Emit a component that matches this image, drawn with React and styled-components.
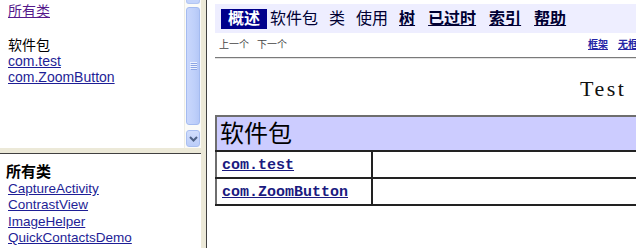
import React from 'react';
import styled, { createGlobalStyle } from 'styled-components';

// ─── Global ───────────────────────────────────────────────────────────────────
const GlobalStyle = createGlobalStyle`
  html, body { margin: 0; padding: 0; overflow: hidden; background: #ECE9D8; }
  #root { width: 636px; height: 248px; }
`;

const CJK = `"Liberation Sans", "Noto Sans CJK SC", sans-serif`;
const MONO = `"Liberation Mono", "Noto Sans CJK SC", monospace`;

// ─── Frameset ────────────────────────────────────────────────────────────────
const Frameset = styled.div`
  display: grid;
  grid-template-columns: 201px 1fr;
  column-gap: 5px;
  width: 636px;
  height: 248px;
  background: #ECE9D8;
  overflow: hidden;
`;

const LeftColumn = styled.div`
  display: grid;
  grid-template-rows: 148px 1fr;
  row-gap: 5px;
  min-height: 0;
`;

const Frame = styled.div`
  background: #fff;
  overflow: hidden;
  min-width: 0;
  min-height: 0;
  ${p => p.$top && 'border-top: 1px solid #404040;'}
  ${p => p.$left && 'border-left: 1px solid #404040;'}
`;

const ScrollFrame = styled(Frame)`
  display: flex;
`;

const FrameBody = styled.div`
  flex: 1;
  min-width: 0;
  padding: ${p => p.$pad || '3px 8px'};
  font-family: ${CJK};
  color: #000;
`;

// ─── Scrollbar (XP style) ────────────────────────────────────────────────────
const ScrollBar = styled.div`
  width: 17px;
  flex: none;
  display: flex;
  flex-direction: column;
  background: #FBFBF8;
  border-left: 1px solid #EEEDE5;
  box-sizing: border-box;
`;

const ScrollStub = styled.div`
  height: 4px;
  margin: 0 1px;
  background: #C4D4FB;
  border: 1px solid #B3C6F2;
  border-top: none;
  border-radius: 0 0 3px 3px;
  box-sizing: border-box;
`;

const ScrollThumb = styled.div`
  height: 118px;
  margin: 3px 1px 0;
  background: linear-gradient(90deg, #C9D7FC 0%, #BFD0FA 60%, #B5C8F7 100%);
  border: 1px solid #A4BBF0;
  border-radius: 3px;
  display: flex;
  align-items: center;
  justify-content: center;
  box-sizing: border-box;
`;

const ScrollSpace = styled.div`
  flex: 1;
`;

const ScrollButton = styled.div`
  height: 17px;
  margin: 0 1px 1px;
  background: linear-gradient(180deg, #D2DEFC 0%, #BBCDF9 100%);
  border: 1px solid #A9BFF1;
  border-radius: 3px;
  display: flex;
  align-items: center;
  justify-content: center;
  box-sizing: border-box;
`;

// ─── Left frames ─────────────────────────────────────────────────────────────
const FrameLink = styled.a`
  display: block;
  width: max-content;
  margin-left: ${p => p.$ml || 0}px;
  font-size: ${p => p.$size || 14}px;
  line-height: ${p => p.$lh || 16}px;
  color: ${p => (p.$visited ? '#551A8B' : '#1E1E96')};
  text-decoration: underline;
  white-space: nowrap;
`;

const FrameHeading = styled.div`
  font-size: ${p => p.$size || 14}px;
  line-height: ${p => p.$lh || 16}px;
  font-weight: ${p => (p.$bold ? 700 : 400)};
  margin-top: ${p => p.$mt || 0}px;
  white-space: nowrap;
`;

// ─── Right frame ─────────────────────────────────────────────────────────────
const Page = styled.div`
  width: 700px;
  padding: 4px 0 0 8px;
  font-family: ${CJK};
`;

const NavBar = styled.div`
  display: flex;
  align-items: center;
  gap: 3px;
  height: 29px;
  padding-left: 6px;
  background: #EEEEFF;
`;

const NavCell = styled.span`
  font-size: 16px;
  line-height: 20px;
  padding-right: ${p => (p.$link ? 10 : 8)}px;
  color: #000033;
  font-weight: ${p => (p.$link ? 700 : 400)};
  text-decoration: ${p => (p.$link ? 'underline' : 'none')};
  white-space: nowrap;
`;

const NavCellRev = styled.span`
  font-size: 16px;
  line-height: 20px;
  padding: 0 7px;
  background: #00008B;
  color: #fff;
  font-weight: 700;
`;

const SubNav = styled.div`
  display: flex;
  align-items: center;
  height: 16px;
  padding: 2px 0 0 4px;
  font-size: 10px;
  color: #444;
`;

const SubItem = styled.span`
  margin-right: 8px;
  white-space: nowrap;
`;

const SubLink = styled.a`
  margin-left: ${p => p.$ml || 0}px;
  margin-right: 10px;
  font-weight: 700;
  color: #2626A6;
  text-decoration: underline;
  white-space: nowrap;
`;

const Rule = styled.div`
  margin-top: 6px;
  border-top: 1px solid #7A7A7A;
  border-bottom: 1px solid #E2E2E2;
`;

const Title = styled.h2`
  margin: 17px 0 0;
  padding-left: 365px;
  font-family: "Liberation Serif", "Noto Sans CJK SC", serif;
  font-weight: 400;
  font-size: 22px;
  letter-spacing: 2.5px;
  line-height: 26px;
  color: #111;
`;

const Table = styled.table`
  margin-top: 13px;
  width: 700px;
  border-collapse: collapse;
  border: 2px solid #6E6E6E;
`;

const HeadCell = styled.th`
  height: 33px;
  padding: 0 3px;
  text-align: left;
  background: #CCCCFF;
  font-size: 24px;
  font-weight: 400;
  line-height: 28px;
  color: #000;
  border-bottom: 2px solid #222;
`;

const Cell = styled.td`
  height: 27px;
  padding: 0 5px;
  width: ${p => p.$w || 'auto'};
  border-bottom: 2px solid #222;
  border-right: ${p => (p.$first ? '2px solid #222' : 'none')};
  box-sizing: border-box;
`;

const CodeLink = styled.a`
  font-family: ${MONO};
  font-weight: 700;
  font-size: 15px;
  color: #1A1A80;
  text-decoration: underline;
`;

// ─── Data ────────────────────────────────────────────────────────────────────
const packages = ['com.test', 'com.ZoomButton'];
const classes = ['CaptureActivity', 'ContrastView', 'ImageHelper', 'QuickContactsDemo'];
const navItems = [
  { label: '软件包' },
  { label: '类' },
  { label: '使用' },
  { label: '树', link: true },
  { label: '已过时', link: true },
  { label: '索引', link: true },
  { label: '帮助', link: true },
];

export default function App() {
  return (
    <>
      <GlobalStyle />
      <Frameset>
        <LeftColumn>
          <ScrollFrame>
            <FrameBody>
              <FrameLink $visited>所有类</FrameLink>
              <FrameHeading $mt={18}>软件包</FrameHeading>
              {packages.map(p => (
                <FrameLink key={p}>{p}</FrameLink>
              ))}
            </FrameBody>
            <ScrollBar>
              <ScrollStub />
              <ScrollThumb>
                <svg width="7" height="8" viewBox="0 0 7 8">
                  {[0, 2, 4, 6].map(y => (
                    <line key={y} x1="0" y1={y + 0.5} x2="7" y2={y + 0.5} stroke="#EEF3FE" strokeWidth="1" />
                  ))}
                  {[1, 3, 5, 7].map(y => (
                    <line key={y} x1="1" y1={y + 0.5} x2="7" y2={y + 0.5} stroke="#8CA5E4" strokeWidth="1" />
                  ))}
                </svg>
              </ScrollThumb>
              <ScrollSpace />
              <ScrollButton>
                <svg width="9" height="6" viewBox="0 0 9 6">
                  <path d="M1 1 L4.5 4.5 L8 1" fill="none" stroke="#4D6185" strokeWidth="2" />
                </svg>
              </ScrollButton>
            </ScrollBar>
          </ScrollFrame>

          <Frame $top>
            <FrameBody $pad="8px 8px 0 6px">
              <FrameHeading $bold $size={15} $lh={19}>所有类</FrameHeading>
              {classes.map(c => (
                <FrameLink key={c} $ml={2} $size={13.5} $lh={16.4}>{c}</FrameLink>
              ))}
            </FrameBody>
          </Frame>
        </LeftColumn>

        <Frame $left>
          <Page>
            <NavBar>
              <NavCellRev>概述</NavCellRev>
              {navItems.map(n => (
                <NavCell key={n.label} $link={n.link}>{n.label}</NavCell>
              ))}
            </NavBar>
            <SubNav>
              <SubItem>上一个</SubItem>
              <SubItem>下一个</SubItem>
              <SubLink $ml={293}>框架</SubLink>
              <SubLink>无框架</SubLink>
            </SubNav>
            <Rule />
            <Title>Test</Title>
            <Table>
              <thead>
                <tr>
                  <HeadCell colSpan={2}>软件包</HeadCell>
                </tr>
              </thead>
              <tbody>
                {packages.map(p => (
                  <tr key={p}>
                    <Cell $first $w="156px"><CodeLink>{p}</CodeLink></Cell>
                    <Cell />
                  </tr>
                ))}
              </tbody>
            </Table>
          </Page>
        </Frame>
      </Frameset>
    </>
  );
}
